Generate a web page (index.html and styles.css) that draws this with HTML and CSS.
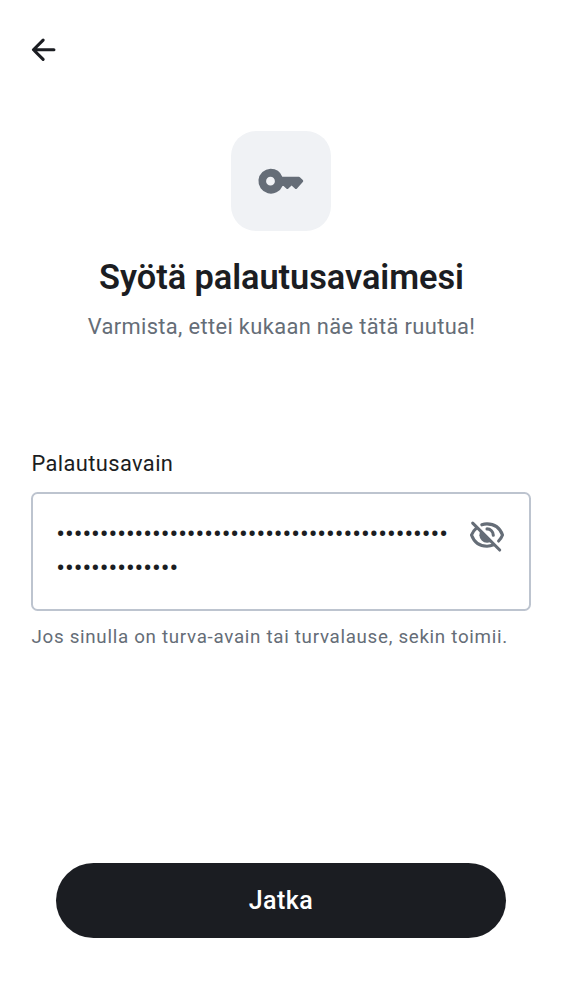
FILE: index.html
```
<!DOCTYPE html>
<html lang="fi">
<head>
<meta charset="utf-8">
<title>Syötä palautusavaimesi</title>
<link rel="stylesheet" href="styles.css">
</head>
<body>
<main class="screen">
  <header class="topbar">
    <svg class="back" viewBox="0 0 24 24" aria-label="Takaisin"><path d="M11.6 5.8 5.4 12l6.2 6.2M5.6 12h12.9"/></svg>
  </header>
  <section class="intro">
    <div class="tile">
      <svg class="key" viewBox="0 0 50 50"><path fill-rule="evenodd" d="M14.500 12.700A12.500 12.500 0 0 1 26.300 20.800H42.900q.6 0 1 .4l2.900 2.900q1 1 0 2l-5.800 6.300q-1 1-2.100 0l-3.300-3-3.200 3.100q-1 1-2.100 0l-2.700-2.600H26.500A12.500 12.500 0 1 1 14.500 12.700zM14.500 20.800a4.400 4.400 0 1 0 0 8.800 4.400 4.400 0 0 0 0-8.800z"/></svg>
    </div>
    <h1 class="title">Syötä palautusavaimesi</h1>
    <p class="subtitle">Varmista, ettei kukaan näe tätä ruutua!</p>
  </section>
  <section class="form">
    <div class="label">Palautusavain</div>
    <div class="field">
      <div class="dots"><div>•••••••••••••••••••••••••••••••••••••••••••••</div><div>••••••••••••••</div></div>
      <svg class="eye" viewBox="0 0 38 38">
        <path class="line" d="M13.800 8.800Q16.300 7.900 19 7.900C26.500 7.900 32 12.200 34.500 19Q33.300 22.300 30.600 25M25.400 28.900Q22.500 30.200 19 30.200C11.500 30.200 6 25.900 3.500 19Q5 15 8.400 12.100"/>
        <path class="fill" d="M13.100 13.800 24.400 25A8 8 0 0 1 13.100 13.800z"/>
        <path class="line" d="M19 12.900a6.300 6.300 0 0 1 6.300 6.300"/>
        <path class="line" d="M4.700 7.200 31.700 34"/>
      </svg>
    </div>
    <div class="hint">Jos sinulla on turva-avain tai turvalause, sekin toimii.</div>
  </section>
  <button class="submit">Jatka</button>
</main>
</body>
</html>
```
FILE: styles.css
```
* { box-sizing: border-box; }
body { margin: 0; background: #fff; color: #1b1d22; font-family: Roboto, sans-serif; }
.screen { height: 1000px; display: flex; flex-direction: column; padding: 31px 31px 62.500px; }
.topbar { height: 100px; }
.back { display: block; width: 37.500px; height: 37.500px; margin-left: -6px; fill: none; stroke: #1b1d22; stroke-width: 2; stroke-linecap: round; stroke-linejoin: round; }
.intro { display: flex; flex-direction: column; align-items: center; height: 322px; }
.tile { width: 100px; height: 100px; border-radius: 25px; background: #f0f2f5; display: flex; align-items: center; justify-content: center; }
.key { width: 50px; height: 50px; fill: #656d77; }
.title { margin: 25px 0 0 1px; font-size: 34.375px; line-height: 43.750px; font-weight: 600; letter-spacing: -.05px; white-space: nowrap; }
.subtitle { margin: 11px 0 0 1px; font-size: 21.875px; line-height: 31.250px; letter-spacing: .36px; color: #656d77; white-space: nowrap; }
.label { margin-left: .5px; font-size: 21.875px; line-height: 22px; letter-spacing: .39px; }
.field { display: flex; justify-content: space-between; margin-top: 17px; width: 500px; height: 119px; border: 2px solid #bdc4cf; border-radius: 6.500px; padding: 22px 23px 0; }
.dots { padding: 1px 0 0 .3px; font-size: 26px; line-height: 34.375px; letter-spacing: -.07px; white-space: nowrap; }
.eye { flex: none; width: 38px; height: 38px; }
.line { fill: none; stroke: #656d77; stroke-width: 3.100; stroke-linecap: round; }
.fill { fill: #656d77; }
.hint { margin: 14px 0 0 .5px; font-size: 18.750px; line-height: 25px; letter-spacing: .7px; color: #656d77; white-space: nowrap; }
.submit { margin: auto 25px 0; height: 75px; border: 0; border-radius: 38px; background: #1b1d22; color: #fff; font: 500 25px/37px Roboto, sans-serif; letter-spacing: .5px; padding-bottom: 1px; }
```
